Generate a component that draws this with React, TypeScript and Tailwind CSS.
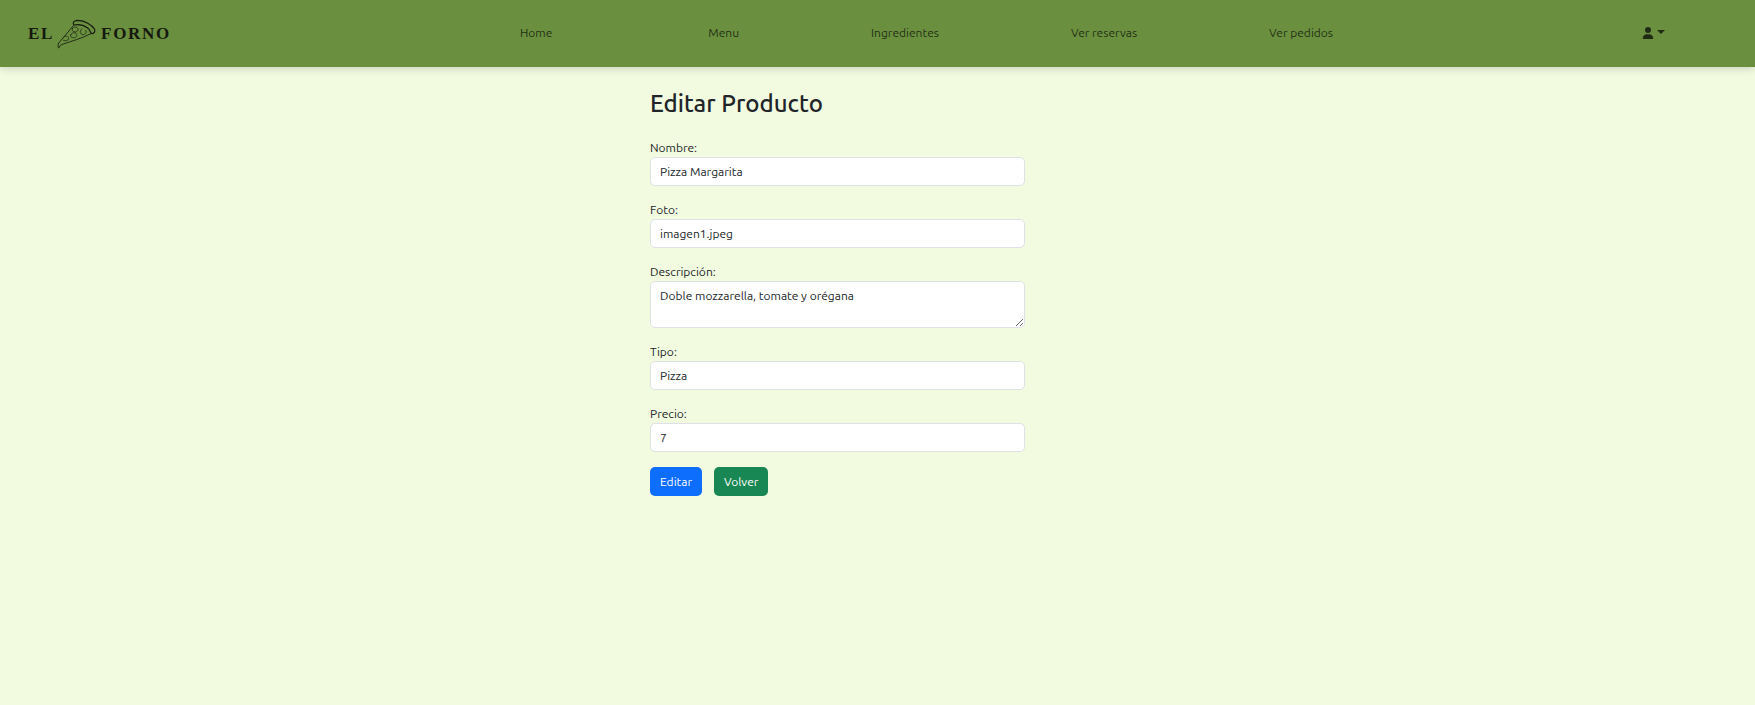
import { FaUser } from "react-icons/fa6";

const links = ["Menu", "Ingredientes", "Ver reservas", "Ver pedidos"];

const control =
  "block w-full rounded-[5px] border border-[#dee2e6] bg-white px-[9px] leading-[18px] text-[#212529] outline-none focus:border-[#86b7fe]";

function PizzaSlice() {
  return (
    <svg
      viewBox="168 54 123 96"
      className="h-8 w-[41px]"
      fill="none"
      stroke="#15190f"
      strokeWidth="3.4"
      strokeLinecap="round"
      strokeLinejoin="round"
      aria-hidden="true"
    >
      <path d="M222 75C216 69 222 61 233 61C254 62 276 74 284 88C286 95 282 101 275 101C270 97 271 90 263 84C252 76 238 72 222 75Z" />
      <path d="M220 77C207 93 192 111 176 129C174 134 173 141 176 144C181 142 178 136 184 134C213 124 246 115 273 101" strokeWidth="2.5" />
      <g strokeWidth="2">
        <path d="M217 86C219 79 233 79 234 87C235 95 227 97 221 95C217 93 216 90 217 86Z" />
        <path d="M246 86C238 91 239 103 249 104C257 104 261 97 257 91" />
        <path d="M212 105C210 111 217 114 224 113C232 111 232 101 226 99C219 97 213 100 212 105Z" />
        <path d="M191 112C195 105 206 108 206 115C206 122 197 124 190 121" />
      </g>
    </svg>
  );
}

function Field({ id, label, value, type = "text" }: { id: string; label: string; value: string; type?: string }) {
  return (
    <div>
      <label htmlFor={id} className="block">{label}</label>
      <input id={id} type={type} defaultValue={value} className={`${control} h-[29px]`} />
    </div>
  );
}

export default function App() {
  return (
    <div className="min-h-screen bg-[#f2fae0] font-['Ubuntu','Noto_Sans',sans-serif] text-[12px] leading-[18px] text-[#212529]">
      <header className="flex h-[67px] items-center bg-[#6a8f3f] pr-[90px] pl-7 text-black/70 shadow-[0_2px_8px_rgba(0,0,0,0.15)]">
        <a
          href="#"
          aria-label="El Forno"
          className="flex items-center gap-0.5 pt-px font-['Liberation_Serif',serif] text-[17px] font-bold tracking-widest text-[#15190f]"
        >
          <span>EL</span>
          <PizzaSlice />
          <span className="pl-0.5">FORNO</span>
        </a>
        <nav className="flex flex-1 items-center justify-center pb-0.5 pl-10 whitespace-nowrap">
          <a href="#" className="mr-[156px]">Home</a>
          <div className="flex gap-[132px]">
            {links.map((link) => (
              <a key={link} href="#">{link}</a>
            ))}
          </div>
        </nav>
        <button type="button" aria-label="Usuario" className="flex items-center gap-[3px] pb-0.5">
          <FaUser className="size-3" />
          <svg viewBox="0 0 8 4" className="mb-0.5 h-1 w-2" fill="currentColor" aria-hidden="true">
            <path d="M0 0h8L4 4z" />
          </svg>
        </button>
      </header>

      <main className="mx-auto w-full max-w-[455px] pt-[22px] pr-20">
        <h1 className="mb-5 text-[24px] leading-[30px] font-medium">Editar Producto</h1>
        <form className="flex flex-col gap-[15px]" onSubmit={(e) => e.preventDefault()}>
          <Field id="nombre" label="Nombre:" value="Pizza Margarita" />
          <Field id="foto" label="Foto:" value="imagen1.jpeg" />
          <div>
            <label htmlFor="descripcion" className="block">Descripción:</label>
            <textarea
              id="descripcion"
              rows={2}
              defaultValue="Doble mozzarella, tomate y orégana"
              className={`${control} h-[47px] resize-y py-[5px]`}
            />
          </div>
          <Field id="tipo" label="Tipo:" value="Pizza" />
          <Field id="precio" label="Precio:" value="7" />
          <div className="flex gap-3 text-white">
            <button type="submit" className="h-[29px] rounded-[5px] bg-[#0d6efd] px-[10px]">Editar</button>
            <button type="button" className="h-[29px] rounded-[5px] bg-[#198754] px-[10px]">Volver</button>
          </div>
        </form>
      </main>
    </div>
  );
}
